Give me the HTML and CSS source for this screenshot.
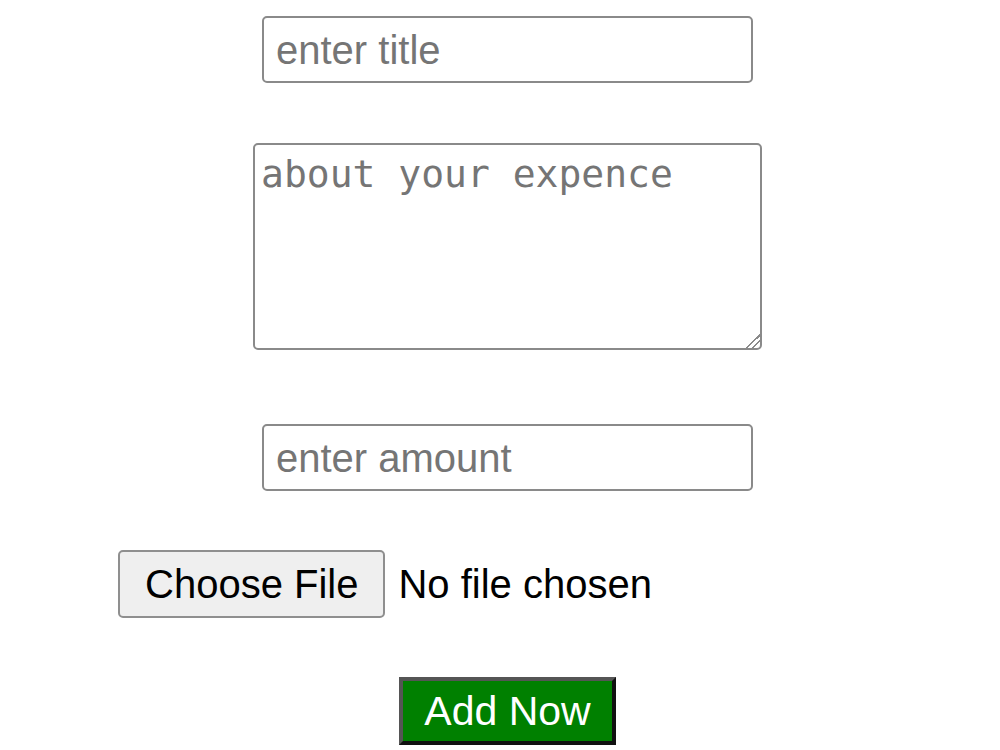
FILE: index.html
```html
<!DOCTYPE html>
<html lang="en">
<head>
    <meta charset="UTF-8">
    <meta name="viewport" content="width=device-width, initial-scale=1.0">
    <title>Add Expence</title>
    <link rel="stylesheet" href="styles.css">
</head>
<body>
    <form class="expence-form" onsubmit="return false">
        <input class="field" type="text" name="title" placeholder="enter title">
        <textarea class="about" name="about" placeholder="about your expence"></textarea>
        <input class="field" type="number" name="amount" placeholder="enter amount">
        <input class="file-picker" type="file" name="bill">
        <button class="add-button" type="submit">Add Now</button>
    </form>
</body>
</html>
```

FILE: styles.css
```css
body {
    margin: 0;
    background: #ffffff;
    font-family: "Liberation Sans", Arial, sans-serif;
}

.expence-form {
    display: flex;
    flex-direction: column;
    align-items: center;
    padding: 16px 0 0 15px;
}

.field {
    box-sizing: border-box;
    width: 491px;
    height: 67px;
    padding: 2px 12px 0;
    border: 2px solid #8a8a8a;
    border-radius: 5px;
    font-family: "Liberation Sans", Arial, sans-serif;
    font-size: 40px;
    color: #000;
}

.field::placeholder,
.about::placeholder {
    color: #757575;
}

/* hide the number arrows */
.field::-webkit-inner-spin-button,
.field::-webkit-outer-spin-button {
    -webkit-appearance: none;
    margin: 0;
}

.about {
    box-sizing: border-box;
    width: 509px;
    height: 207px;
    margin: 60px 0 74px;
    padding: 7px 6px 6px;
    border: 2px solid #8a8a8a;
    border-radius: 5px;
    font-family: "DejaVu Sans Mono", "Liberation Mono", monospace;
    font-size: 38px;
}

/* bigger grip in the corner */
.about::-webkit-scrollbar {
    width: 20px;
    height: 20px;
}

.about::-webkit-resizer {
    background: linear-gradient(135deg,
        transparent 52%, #8a8a8a 52%, #8a8a8a 60%,
        transparent 60%, transparent 72%, #8a8a8a 72%, #8a8a8a 80%,
        transparent 80%);
}

.file-picker {
    box-sizing: border-box;
    width: 779px;
    height: 68px;
    margin-top: 59px;
    font-family: "Liberation Sans", Arial, sans-serif;
    font-size: 40px;
    color: #000;
}

.file-picker::file-selector-button {
    height: 68px;
    padding: 0 25px;
    margin-right: 13px;
    border: 2px solid #8f8f8f;
    border-radius: 5px;
    background: #efefef;
    font: inherit;
    color: #000;
}

.add-button {
    box-sizing: border-box;
    width: 217px;
    height: 68px;
    margin-top: 59px;
    padding: 0;
    background: #008000;
    color: #ffffff;
    border: 4px solid;
    border-color: #555555 #111111 #111111 #555555;
    font-family: "Liberation Sans", Arial, sans-serif;
    font-size: 41px;
}
```
